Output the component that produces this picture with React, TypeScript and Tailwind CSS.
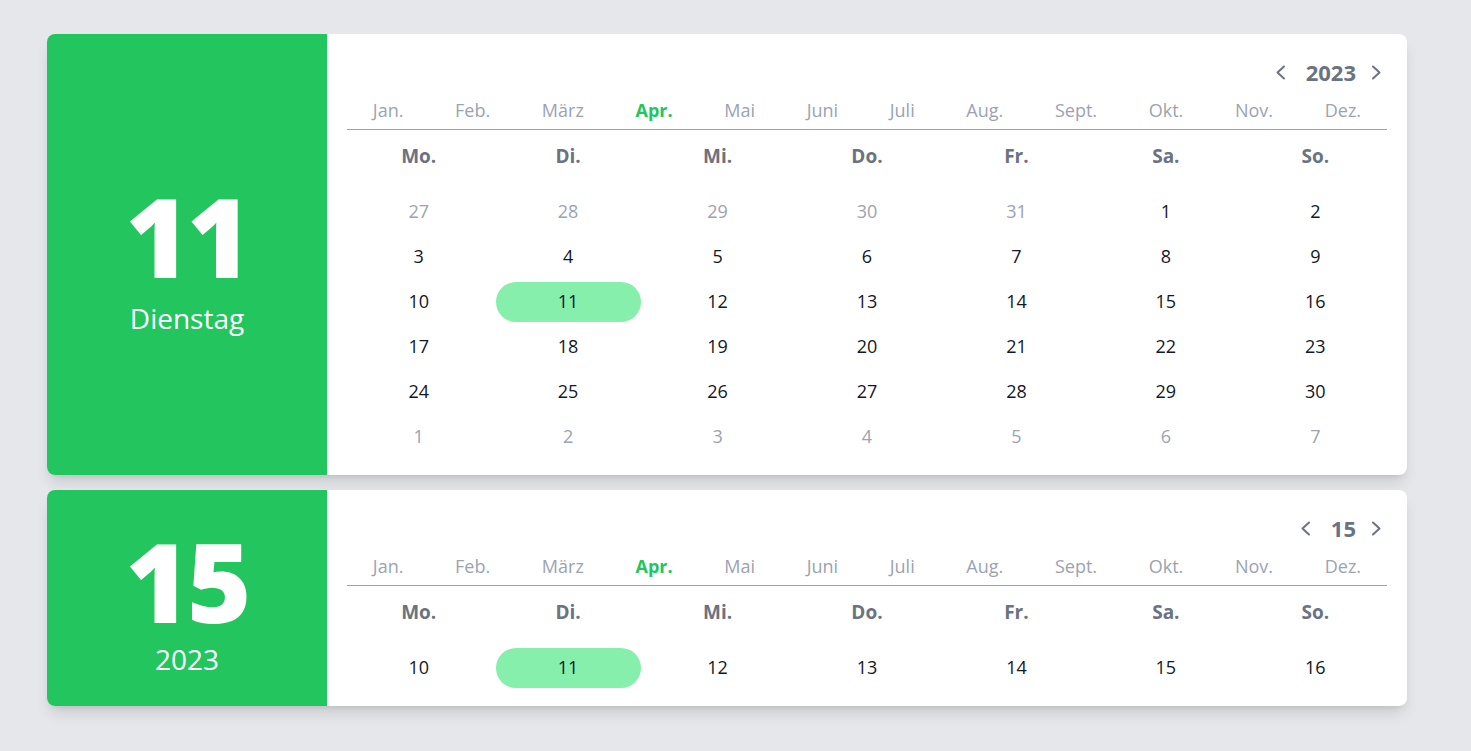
import React from "react";

const MONTHS = ["Jan.", "Feb.", "März", "Apr.", "Mai", "Juni", "Juli", "Aug.", "Sept.", "Okt.", "Nov.", "Dez."];
const WEEKDAYS = ["Mo.", "Di.", "Mi.", "Do.", "Fr.", "Sa.", "So."];

type Day = { n: number; muted?: boolean; selected?: boolean };

const monthRows: Day[][] = [
  [{ n: 27, muted: true }, { n: 28, muted: true }, { n: 29, muted: true }, { n: 30, muted: true }, { n: 31, muted: true }, { n: 1 }, { n: 2 }],
  [{ n: 3 }, { n: 4 }, { n: 5 }, { n: 6 }, { n: 7 }, { n: 8 }, { n: 9 }],
  [{ n: 10 }, { n: 11, selected: true }, { n: 12 }, { n: 13 }, { n: 14 }, { n: 15 }, { n: 16 }],
  [{ n: 17 }, { n: 18 }, { n: 19 }, { n: 20 }, { n: 21 }, { n: 22 }, { n: 23 }],
  [{ n: 24 }, { n: 25 }, { n: 26 }, { n: 27 }, { n: 28 }, { n: 29 }, { n: 30 }],
  [{ n: 1, muted: true }, { n: 2, muted: true }, { n: 3, muted: true }, { n: 4, muted: true }, { n: 5, muted: true }, { n: 6, muted: true }, { n: 7, muted: true }],
];

const weekRows: Day[][] = [monthRows[2]];

function Chevron({ dir }: { dir: "left" | "right" }) {
  return (
    <svg width="11" height="15" viewBox="0 0 11 15" fill="none" className="block">
      <path
        d={dir === "left" ? "M9 1.5 L2.5 7.5 L9 13.5" : "M2 1.5 L8.5 7.5 L2 13.5"}
        stroke="#6b7280"
        strokeWidth="2"
        strokeLinecap="round"
        strokeLinejoin="round"
      />
    </svg>
  );
}

function CalendarCard({
  big,
  sub,
  navLabel,
  rows,
  tight,
}: {
  big: string;
  sub: string;
  navLabel: string;
  rows: Day[][];
  tight?: boolean;
}) {
  return (
    <div className="flex w-[1360px] rounded-lg bg-white shadow-[0_10px_15px_-3px_rgba(0,0,0,0.12),0_4px_6px_-4px_rgba(0,0,0,0.12)]">
      <div
        className={
          tight
            ? "flex w-[280px] shrink-0 flex-col items-center justify-center rounded-l-lg bg-[#22c55e] pt-[11px] text-white"
            : "flex w-[280px] shrink-0 flex-col items-center justify-center rounded-l-lg bg-[#22c55e] pt-[12px] text-white"
        }
      >
        <div className="text-[110px] font-extrabold leading-[100px] tracking-[-3px]">{big}</div>
        <div className={tight ? "mt-[11px] text-[28px] leading-[36px]" : "mt-[15px] text-[28px] leading-[36px]"}>{sub}</div>
      </div>
      <div className="flex-1 px-5 pt-5 pb-4">
        <div className="flex h-9 items-center justify-end pr-[5px]">
          <button className="flex h-9 items-center">
            <Chevron dir="left" />
          </button>
          <span className="ml-[20px] text-[22px] font-bold leading-[34px] text-[#6b7280]">{navLabel}</span>
          <button className="ml-[15px] flex h-9 items-center">
            <Chevron dir="right" />
          </button>
        </div>
        <div className="mt-[6px] flex justify-around border-b border-[#a1a1aa] pb-[5px]">
          {MONTHS.map((m) => (
            <span
              key={m}
              className={
                m === "Apr."
                  ? "text-[18px] leading-[28px] font-bold text-[#22c55e]"
                  : "text-[18px] leading-[28px] text-[#9ca3af]"
              }
            >
              {m}
            </span>
          ))}
        </div>
        <div className="-mx-[3px] mt-[4px] grid grid-cols-7">
          {WEEKDAYS.map((w) => (
            <div
              key={w}
              className="flex h-[45px] items-center justify-center text-[19px] font-bold text-[#6b7280]"
            >
              {w}
            </div>
          ))}
        </div>
        <div className="-mx-[3px] mt-[10px] flex flex-col">
          {rows.map((row, i) => (
            <div key={i} className="grid grid-cols-7">
              {row.map((d, j) => (
                <div key={j} className="flex h-[45px] items-center justify-center">
                  <span
                    className={
                      d.selected
                        ? "flex h-10 w-[145px] items-center justify-center rounded-full bg-[#86efac] text-[18px] text-[#111827]"
                        : d.muted
                        ? "text-[18px] text-[#9ca3af]"
                        : "text-[18px] text-[#111827]"
                    }
                  >
                    {d.n}
                  </span>
                </div>
              ))}
            </div>
          ))}
        </div>
      </div>
    </div>
  );
}

export default function App() {
  return (
    <div
      className="min-h-screen bg-[#e5e7eb] pl-[47px] pt-[34px] pb-[45px]"
      style={{ fontFamily: '"Open Sans", "Noto Sans", sans-serif' }}
    >
      <div className="flex flex-col gap-[15px]">
        <CalendarCard big="11" sub="Dienstag" navLabel="2023" rows={monthRows} />
        <CalendarCard big="15" sub="2023" navLabel="15" rows={weekRows} tight />
      </div>
    </div>
  );
}
